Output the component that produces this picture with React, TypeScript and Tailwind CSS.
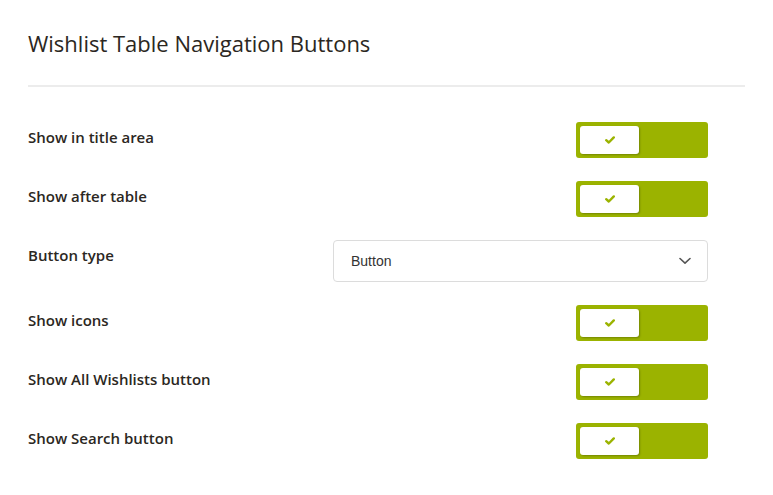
import React from 'react';

interface ToggleRowProps {
    label: string;
}

const CheckToggle: React.FC = () => (
    <div className="w-[132px] h-[36px] rounded-[3px] bg-[#9bb300] p-[4px] flex items-stretch">
        <div className="w-[59px] bg-white rounded-[3px] shadow-[1px_1px_2px_rgba(0,0,0,0.25)] flex items-center justify-center">
            <svg width="10" height="8" viewBox="0 0 10 8" fill="none">
                <path d="M1.2 4.2 L3.8 6.5 L8.8 1.4" stroke="#9bb300" strokeWidth="2.4" strokeLinecap="round" strokeLinejoin="round" />
            </svg>
        </div>
    </div>
);

const ToggleRow: React.FC<ToggleRowProps> = ({ label }) => (
    <div className="flex">
        <div className="w-[305px] pt-[5px] text-[15px] leading-[20px] font-semibold text-[#2b2722]">{label}</div>
        <div className="w-[375px] flex justify-end">
            <CheckToggle />
        </div>
    </div>
);

const App: React.FC = () => {
    return (
        <div className="w-[773px] h-[495px] bg-white px-[28px] pt-[29px]" style={{ fontFamily: '"Open Sans", sans-serif' }}>
            <h2 className="text-[22px] leading-[28px] font-normal text-[#2b2722]">Wishlist Table Navigation Buttons</h2>
            <div className="mt-[28px] h-[2px] bg-[#ececec]"></div>
            <div className="mt-[35px] flex flex-col gap-[23px]">
                <ToggleRow label="Show in title area" />
                <ToggleRow label="Show after table" />
                <div className="flex">
                    <div className="w-[305px] pt-[5px] text-[15px] leading-[20px] font-semibold text-[#2b2722]">Button type</div>
                    <div className="w-[375px] h-[42px] border border-[#dcdcdc] rounded-[4px] bg-white flex items-center justify-between pl-[17px] pr-[16px]">
                        <span className="text-[14px] text-[#333]" style={{ fontFamily: '"Liberation Sans", Arial, sans-serif' }}>Button</span>
                        <svg width="12" height="8" viewBox="0 0 12 8" fill="none">
                            <path d="M1 1.5 L6 6.2 L11 1.5" stroke="#555" strokeWidth="1.6" strokeLinecap="round" strokeLinejoin="round" />
                        </svg>
                    </div>
                </div>
                <ToggleRow label="Show icons" />
                <ToggleRow label="Show All Wishlists button" />
                <ToggleRow label="Show Search button" />
            </div>
        </div>
    );
};

export default App;
